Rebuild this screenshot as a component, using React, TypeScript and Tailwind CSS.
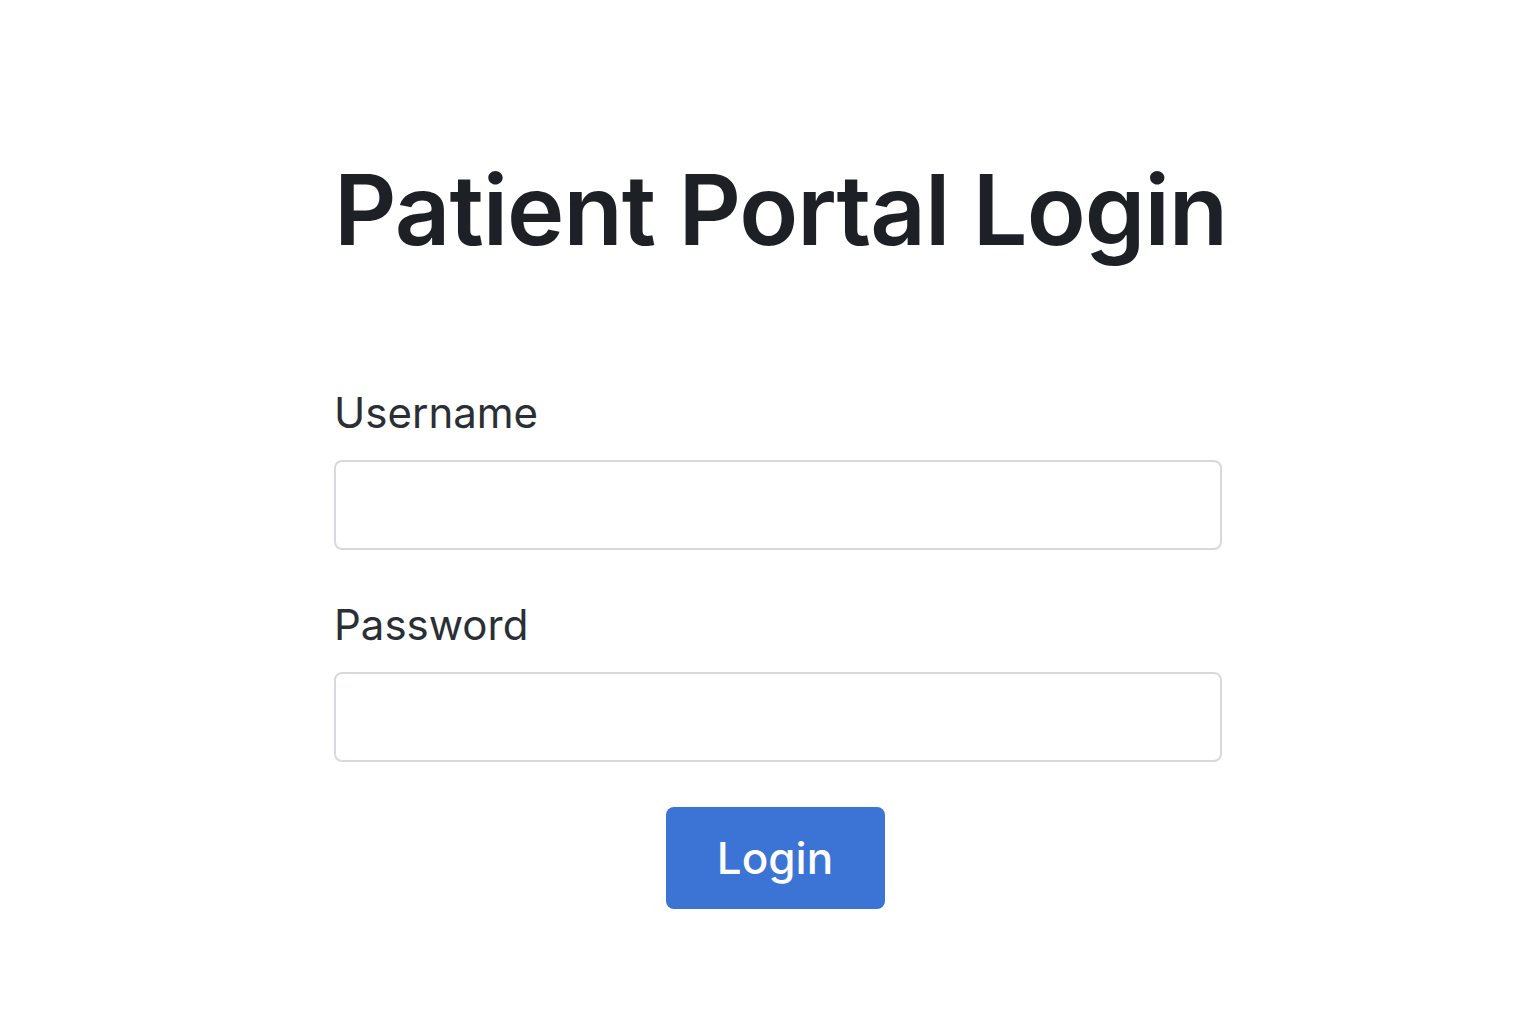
export default function App() {
  return (
    <div className="min-h-screen w-full bg-white" style={{ fontFamily: "Inter, 'Noto Sans', sans-serif" }}>
      <div className="flex justify-center">
        <div className="ml-[20px] flex w-[888px] flex-col pt-[150px]">
          <h1 className="whitespace-nowrap text-center text-[97px] font-semibold leading-[120px] tracking-[-1px] text-[#1d2025]">
            Patient Portal Login
          </h1>
          <div className="mt-[118px] flex flex-col">
            <label className="text-[42px] leading-[50px] text-[#2a2f36]">Username</label>
            <input type="text" className="mt-[22px] h-[90px] w-full rounded-[8px] border-2 border-[#d6d9dd] bg-white" />
            <label className="mt-[50px] text-[42px] leading-[50px] text-[#2a2f36]">Password</label>
            <input type="password" className="mt-[22px] h-[90px] w-full rounded-[8px] border-2 border-[#d6d9dd] bg-white" />
          </div>
          <div className="mt-[45px] flex justify-center">
            <button className="mr-[6px] h-[102px] w-[219px] rounded-[8px] bg-[#3b74d5] text-[44px] font-medium text-white">
              Login
            </button>
          </div>
        </div>
      </div>
    </div>
  );
}
